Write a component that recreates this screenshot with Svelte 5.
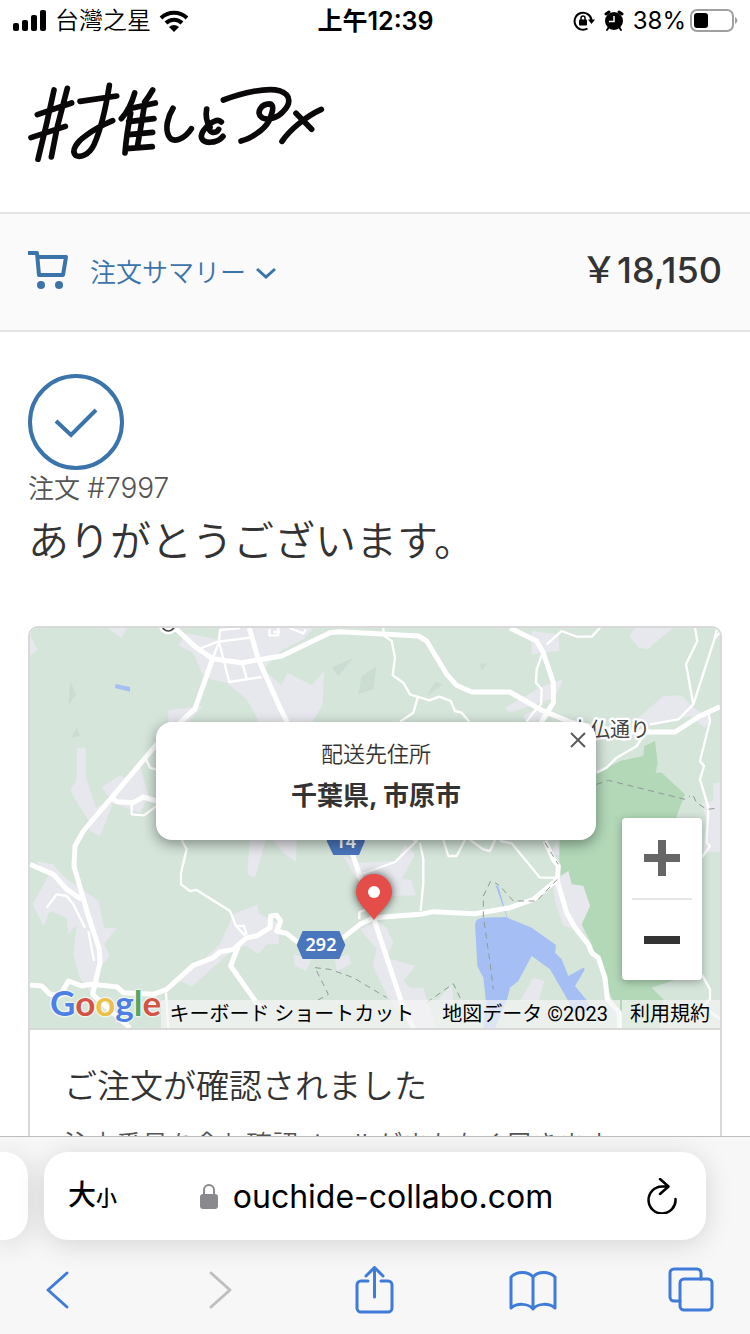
<script lang="ts">
	let summaryOpen: boolean = false;

	const orderNumber: string = "#7997";
	const total: string = "￥18,150";
	const site: string = "ouchide-collabo.com";

	const googleLetters: Array<{char: string, tone: string}> = [
		{ char: "G", tone: "blue" },
		{ char: "o", tone: "red" },
		{ char: "o", tone: "yellow" },
		{ char: "g", tone: "blue" },
		{ char: "l", tone: "green" },
		{ char: "e", tone: "red" }
	];

	const townAreas: Array<string> = [
		"30,60 52,100 30,120",
		"262,36 320,36 305,66",
		"475,88 500,52 592,70 600,36 880,36 850,70 790,100 760,125 740,150 735,165 785,208 802,170 875,208 912,165 908,265 870,330 725,330 680,250 620,200 565,188 545,170 520,110",
		"445,283 548,270 500,325 445,325",
		"150,525 170,490 170,395 197,395 197,485 228,575 270,550 245,512 300,478 320,490 360,450 385,540 360,590 280,560 240,660 210,645 210,620",
		"48,735 100,745 130,780 235,855 252,935 290,935 252,985 270,1020 230,1065 240,1105 215,1135 180,1085 160,1015 170,925 145,955 140,905 90,885 70,930 38,865 85,780",
		"480,1095 600,985 640,895 710,867 720,895 780,925 775,985 740,985 715,1015 680,990 640,1000 515,1112",
		"690,660 740,660 705,785 682,775",
		"750,660 830,660 828,737 790,710",
		"970,720 1020,740 1130,735 1155,685 1185,715 1145,790 1175,792 1187,838 1115,840 1080,800 1010,790",
		"1020,940 1070,915 1100,935 1120,980 1100,1025 1185,1050 1150,1095 1170,1115 1210,1115 1220,1150 1250,1236 1180,1236 1105,1145 1058,1050 1070,1000",
		"820,1015 875,1030 858,1065 825,1050",
		"945,1030 985,1015 993,1045 950,1065",
		"1295,1105 1300,1160 1250,1155",
		"1540,1085 1573,1095 1555,1155 1500,1155",
		"1610,675 1625,720 1595,715",
		"2060,615 2045,560 2080,555 2080,500 2100,500 2100,707 2050,707",
		"1535,45 1615,55 1618,105 1535,115",
		"1455,275 1570,210 1630,190 1605,245 1470,290",
		"1510,300 1560,270 1590,300 1520,325",
		"1828,60 1845,36 1960,36 1905,80 1885,100 1855,95",
		"1850,310 1930,240 1985,238 2015,270 2075,310 2055,335 2010,300 1890,330"
	];

	const terrain: Array<string> = [
		"150,195 168,235 145,270",
		"170,332 180,360 155,365",
		"935,155 1000,125 955,180",
		"1070,150 1060,220 1015,235 1025,180",
		"1245,198 1270,205 1220,240",
		"1380,145 1402,140 1385,165"
	];

	const mainRoads: Array<string> = [
		"M465 36 525 92 578 128 665 140 785 120 930 50 960 47 1195 60 1220 75 1280 175 1310 208 1355 228 1470 228 1560 280 1650 318 1760 348H1965L2040 300 2100 272",
		"M578 128 525 278 410 385 275 545 190 645 165 690 162 750 205 900 238 1000 240 1040 218 1135 330 1236",
		"M688 36 715 130 780 275 1000 720 1062 910 1145 1160 1180 1236",
		"M30 745 100 775 140 820 185 850",
		"M30 1107 65 1110 90 1135 120 1140 145 1095 185 1110 210 1105 290 1112 310 1130 400 1135 440 1120 520 1048 580 1025 600 1008 640 1000 680 965 710 960 750 935 752 900 770 898 782 915 770 945 800 952 835 980 970 965 1020 925 1062 905 1200 895 1240 887 1365 893 1470 875 1540 850 1612 790",
		"M655 990 632 1050 720 1175",
		"M1575 675 1600 730 1615 750 1612 795 1640 890 1665 935 1705 985 1715 1010 1735 1025 1755 1085 1762 1150 1798 1190V1236",
		"M1470 36 1550 75 1570 110 1600 200 1600 260 1560 325",
		"M275 545 290 557 340 560 370 543 420 558"
	];

	const minorRoads: Array<string> = [
		"M540 98 590 78 690 65M660 36 600 42 597 78 628 198 725 183M597 78 578 128M668 145 680 188M748 38V58H775V36M760 48H780M808 36 850 52 858 40",
		"M335 565V595L372 598 410 570M378 430 390 455 420 465",
		"M1090 36V58L1115 75 1125 125 1118 178 1150 200 1170 235 1228 253 1258 242 1292 255 1305 285 1325 290 1348 317M1193 245 1180 290 1140 317",
		"M1580 85 1625 45 1670 62H1715L1740 36M1570 105 1550 160 1548 200 1565 220 1563 265 1540 290 1520 317",
		"M2025 36 2032 75 1998 145 2020 265M2092 36 2080 80 2020 265 1975 310 1890 325M2100 50 2085 65M2065 290 2070 315 2040 435 2052 450 2040 490 2065 575 2060 680 2070 690 2045 725",
		"M1730 470 1760 455 1790 425 1850 390 1870 360",
		"M485 672 500 700 483 770V805L510 825 530 822 630 885 648 930 675 958M648 930H672L680 955",
		"M80 875 110 835 140 840 160 865 195 935M205 945 222 1035M200 880 215 915",
		"M1010 780 1125 738 1190 675 1180 672M1200 680 1210 730V800L1202 885M1050 878 1018 888V910M1270 672 1285 720H1310L1335 672M1350 672 1390 700 1410 705 1425 672",
		"M1440 675 1475 682 1560 785H1612",
		"M2045 1075 2070 1120V1150L2050 1170 2100 1210M438 1130 445 1236"
	];

	const trails: Array<string> = [
		"M1730 505 1765 493 1995 550 2010 540M2020 540 2030 560 2060 580 2090 577",
		"M1575 680 1615 745M1612 790 1550 855 1480 855 1440 810 1425 800M1412 795 1390 840V900L1410 1040 1420 1120",
		"M885 1055 930 1060 1000 1085 1100 1145M890 1065 925 1135 880 1160M1220 1160 1300 1103 1325 1155"
	];
</script>

<svelte:head>
	<title>注文 {orderNumber}</title>
</svelte:head>

<div class="screen">
	<div class="status-bar">
		<div class="status-left">
			<svg class="signal" viewBox="0 0 34 22" width="34" height="22" aria-hidden="true">
				<rect x="0" y="13" width="6" height="8" rx="2" />
				<rect x="9" y="10" width="6" height="11" rx="2" />
				<rect x="18" y="5" width="6" height="16" rx="2" />
				<rect x="27" y="0" width="6" height="21" rx="2" />
			</svg>
			<span>台灣之星</span>
			<svg viewBox="0 0 30 22" width="30" height="22" aria-hidden="true">
				<g fill="none" stroke="#000" stroke-width="4">
					<path d="M2 8A19 19 0 0 1 28 8" />
					<path d="M7 13A11.500 11.500 0 0 1 23 13" />
				</g>
				<path d="M15 22 10 17Q15 13 20 17Z" />
			</svg>
		</div>
		<div class="time">上午12:39</div>
		<div class="status-right">
			<svg viewBox="0 0 22 22" width="22" height="22" aria-hidden="true">
				<path d="M14.500 18.500A8.500 8.500 0 1 1 18.500 10" fill="none" stroke="#000" stroke-width="2" />
				<path d="M15 9.500H22L18.500 14Z" />
				<rect x="6" y="9.500" width="8" height="6" rx="1" />
				<path d="M8 10V8a2 2 0 0 1 4 0v2" fill="none" stroke="#000" stroke-width="1.500" />
			</svg>
			<svg class="alarm" viewBox="0 0 20 22" width="20" height="22" aria-hidden="true">
				<circle cx="10" cy="11" r="9" />
				<path d="M2 4 5 2M15 2 18 4" stroke="#000" stroke-width="3" stroke-linecap="round" />
				<path d="M5 17 3 20M15 17 17 20" stroke="#000" stroke-width="2" stroke-linecap="round" />
				<path d="M10 6V11.500H5" fill="none" stroke="#fff" stroke-width="1.500" />
			</svg>
			<span>38%</span>
			<svg viewBox="0 0 48 24" width="48" height="24" aria-hidden="true">
				<rect x="1" y="1" width="42" height="21" rx="6" fill="none" stroke="#a0a0a0" stroke-width="2" />
				<rect x="4" y="4" width="14" height="15" rx="3" />
				<path d="M45 8Q50 11.500 45 15Z" fill="#a0a0a0" />
			</svg>
		</div>
	</div>

	<main>
		<header>
			<a class="logo" href="/" aria-label="#推しとアメ">
				<svg viewBox="84 246 891 240" width="297" height="80" aria-hidden="true">
					<g fill="none" stroke="#0a0808" stroke-width="17" stroke-linecap="round" stroke-linejoin="round">
						<path d="M162 270 140 370 114 478M202 265 172 380 154 471M112 344 215 309M93 413 196 379" />
						<path d="M328 256C318 320 306 380 282 434C266 466 240 474 227 466C212 452 232 424 256 408C282 388 314 372 338 362M240 304 350 288" />
						<path d="M404 279C396 308 384 334 364 356M458 270C450 284 442 296 434 306M392 340C384 380 378 420 375 459M384 327 466 309M386 365 462 356M386 404 458 397M380 446 457 440M434 310C428 350 420 396 412 440" />
						<path d="M519 325C502 352 495 386 506 408C520 434 556 414 574 386" />
						<path d="M620 327C616 348 620 366 630 382M664 366C648 348 606 388 604 408C604 434 650 432 669 409M630 382C622 400 650 402 656 388" />
						<path d="M670 300C730 278 800 262 838 272C880 286 868 316 850 334C832 354 806 362 788 354C764 340 784 310 812 312C826 320 812 350 806 364C792 390 752 416 723 423" />
						<path d="M964 328C920 348 870 388 846 424M888 340 935 388" />
					</g>
				</svg>
			</a>
		</header>

		<section class="summary">
			<button class="summary-toggle" aria-expanded={summaryOpen} on:click={() => summaryOpen = !summaryOpen}>
				<svg viewBox="0 0 40 38" width="40" height="38" aria-hidden="true">
					<path d="M0 2H9L11 24H35L38 6H10" fill="none" stroke="#3b74ab" stroke-width="4" stroke-linejoin="round" />
					<circle cx="13" cy="34" r="4" fill="#3b74ab" />
					<circle cx="31" cy="34" r="4" fill="#3b74ab" />
				</svg>
				<span>注文サマリー</span>
				<svg class="chevron" class:open={summaryOpen} viewBox="0 0 20 18" width="20" height="18" aria-hidden="true">
					<path d="M1 8 10 16 19 8" fill="none" stroke="#3b74ab" stroke-width="3" />
				</svg>
			</button>
			<strong class="total">{total}</strong>
		</section>

		<section class="content">
			<svg class="check" viewBox="0 0 96 96" width="96" height="96" aria-hidden="true">
				<circle cx="48" cy="48" r="46" />
				<path d="M28 47 43 61 68 36" />
			</svg>
			<p class="order-number">注文 <span>{orderNumber}</span></p>
			<h1>ありがとうございます。</h1>

			<article class="card">
				<div class="map">
					<svg class="map-art" viewBox="30 36 2070 1200" preserveAspectRatio="xMidYMid slice" aria-hidden="true">
						{#each townAreas as area}
							<polygon points={area} fill="#e7e8ed" />
						{/each}
						{#each terrain as slope}
							<polygon points={slope} fill="#cbdcd2" />
						{/each}
						<path d="M1620 615 1610 480 1730 470 1800 435 1870 420 1873 390 1905 375 1913 440 1907 470 1925 470 1995 535 1970 600V1090L1895 1115 1930 1150 1920 1236H1800L1790 1175 1760 1115 1715 985 1685 925 1710 870 1690 810 1655 805 1645 765 1620 780 1618 725Z" fill="#b2d8b8" />
						<polygon points="1600,800 1645,765 1655,805 1690,810 1710,870 1685,925 1690,945 1630,930 1605,855" fill="#e7e8ed" />
						<path d="M1370 912 1385 905 1460 903 1427 808 1435 810 1462 905 1535 935 1608 987 1605 1010 1625 1030 1645 1080 1690 1055 1695 1060 1665 1110 1702 1155 1715 1185 1660 1190 1645 1155 1590 1060 1535 1020 1495 1095 1470 1115 1460 1155 1425 1236H1390L1398 1155 1390 1085 1372 1050 1365 925Z" fill="#a5bff4" />
						<path d="M287 204 330 213V227L285 216Z" fill="#a5bff4" />
						<g class="roads minor">
							{#each minorRoads as road}
								<path d={road} />
							{/each}
						</g>
						<g class="roads">
							{#each mainRoads as road}
								<path d={road} />
							{/each}
						</g>
						<g class="trails">
							{#each trails as trail}
								<path d={trail} />
							{/each}
						</g>
						<circle cx="445" cy="26" r="20" fill="#fff" stroke="#fff" stroke-width="18" />
						<circle cx="445" cy="26" r="19" fill="#fff" stroke="#444" stroke-width="5" />
						<polygon class="shield" points="935,645 1017,645 1035,675 1017,717 940,717 920,675" />
						<text class="route" x="977" y="695">14</text>
						<polygon class="shield" points="848,945 958,945 976,987 958,1029 848,1029 830,987" />
						<text class="route" x="903" y="1005">292</text>
						<text class="street" x="1650" y="363">大仏通り</text>
					</svg>

					<svg class="pin" viewBox="0 0 60 66" width="60" height="66" aria-hidden="true">
						<path d="M30 56C24 47 12 39 12 28A18 18 0 0 1 48 28C48 39 36 47 30 56Z" fill="#e44d48" />
						<circle cx="30" cy="28" r="6" fill="#fff" />
					</svg>

					<div class="info-window">
						<p class="info-title">配送先住所</p>
						<p class="info-place">千葉県, 市原市</p>
						<button class="close" aria-label="閉じる">
							<svg viewBox="0 0 16 16" width="16" height="16" aria-hidden="true">
								<path d="M1 1 15 15M15 1 1 15" stroke="#5c5c5c" stroke-width="2" />
							</svg>
						</button>
					</div>

					<div class="zoom">
						<button aria-label="ズームイン">
							<svg viewBox="0 0 36 36" width="36" height="36" aria-hidden="true">
								<path d="M14 0H22V14H36V22H22V36H14V22H0V14H14Z" fill="#666" />
							</svg>
						</button>
						<button aria-label="ズームアウト">
							<svg viewBox="0 0 36 36" width="36" height="36" aria-hidden="true">
								<path d="M0 14H36V22H0Z" fill="#333" />
							</svg>
						</button>
					</div>

					<div class="attribution">
						<button>キーボード ショートカット</button>
						<span>地図データ ©2023</span>
						<a href="https://www.google.com/help/terms_maps/">利用規約</a>
					</div>

					<a class="google" href="https://maps.google.com/" aria-label="Google">
						{#each googleLetters as letter}<span class={letter.tone}>{letter.char}</span>{/each}
					</a>
				</div>

				<div class="card-text">
					<h2>ご注文が確認されました</h2>
					<p>注文番号を含む確認メールがまもなく届きます。</p>
				</div>
			</article>
		</section>
	</main>

	<footer>
		<div class="tabs">
			<div class="tab previous"></div>
			<div class="tab current">
				<button class="text-size" aria-label="大小">大<small>小</small></button>
				<button class="address">
					<svg viewBox="0 0 18 26" width="18" height="26" aria-hidden="true">
						<path d="M4 12V7a5 5 0 0 1 10 0V12" fill="none" stroke="#8a8a8e" stroke-width="2" />
						<rect x="0" y="11" width="18" height="15" rx="3" fill="#8a8a8e" />
					</svg>
					<span>{site}</span>
				</button>
				<button class="reload" aria-label="再読み込み">
					<svg viewBox="0 0 32 36" width="32" height="36" aria-hidden="true">
						<path d="M22 8.500H16A13.500 13.500 0 1 0 29.500 21M14 1 22.500 8.500 14 16" fill="none" stroke="#000" stroke-width="2.500" stroke-linecap="round" stroke-linejoin="round" />
					</svg>
				</button>
			</div>
		</div>
		<nav class="toolbar">
			<button aria-label="戻る">
				<svg viewBox="0 0 48 48" width="48" height="48"><path d="M34 7 15 24 34 41" /></svg>
			</button>
			<button aria-label="進む" disabled>
				<svg viewBox="0 0 48 48" width="48" height="48"><path d="M19 7 38 24 19 41" /></svg>
			</button>
			<button aria-label="共有">
				<svg viewBox="0 0 48 48" width="48" height="48">
					<path d="M18 15H11A4 4 0 0 0 7 19V42A4 4 0 0 0 11 46H38A4 4 0 0 0 42 42V19A4 4 0 0 0 38 15H31M24.500 31V2M16 10 24.500 1.500 33 10" />
				</svg>
			</button>
			<button aria-label="ブックマーク">
				<svg viewBox="0 0 48 48" width="48" height="48">
					<path d="M24 11C19 5 8 5 2 11V42C8 37 19 37 24 43C29 37 40 37 46 42V11C40 5 29 5 24 11V43" />
				</svg>
			</button>
			<button aria-label="タブ">
				<svg viewBox="0 0 48 48" width="48" height="48">
					<path d="M13 35H7A4 4 0 0 1 3 31V7A4 4 0 0 1 7 3H30A4 4 0 0 1 34 7V13" />
					<rect x="13" y="13" width="32" height="31" rx="4" />
				</svg>
			</button>
		</nav>
	</footer>
</div>

<style>
	:global(body) {
		margin: 0;
		background-color: #fff;
	}

	.screen {
		height: 100vh;
		display: flex;
		flex-direction: column;
		overflow: hidden;
		font-family: Inter, "Noto Sans CJK JP", sans-serif;
		font-weight: 350;
		color: #333;
	}

	button {
		border: none;
		padding: 0;
		background: none;
		font: inherit;
		color: inherit;
	}

	a {
		color: inherit;
		text-decoration: none;
	}

	h1, h2, p {
		margin: 0;
		font-weight: 350;
	}

	svg {
		display: block;
		flex: none;
	}

	.status-bar {
		display: grid;
		grid-template-columns: 1fr auto 1fr;
		align-items: center;
		height: 42px;
		padding: 0 12px 0 13px;
		box-sizing: border-box;
		font-family: Inter, "Noto Sans CJK TC", sans-serif;
		font-size: 24px;
		line-height: 24px;
		font-weight: 400;
		color: #000;
	}

	.status-left, .status-right {
		display: flex;
		align-items: center;
		gap: 8px;
	}

	.status-left {
		font-weight: 350;
	}

	.status-right {
		justify-content: flex-end;
		gap: 4px;
	}

	.alarm {
		margin: 0 5px;
	}

	.time {
		font-size: 25px;
		font-weight: 600;
	}

	main {
		flex: 1;
		min-height: 0;
		overflow: hidden;
	}

	header {
		padding: 40px 28px 50px;
	}

	.logo {
		display: inline-block;
		vertical-align: top;
	}

	.summary {
		display: flex;
		justify-content: space-between;
		align-items: center;
		height: 112px;
		padding: 0 28px 4px;
		border-top: 2px solid #e4e4e4;
		border-bottom: 2px solid #e4e4e4;
		background-color: #fafafa;
	}

	.summary-toggle {
		display: flex;
		align-items: center;
		font-size: 26px;
		color: #3b74ab;
	}

	.summary-toggle span {
		margin: 0 10px 0 22px;
	}

	.chevron.open {
		transform: rotate(180deg);
	}

	.total {
		font-size: 36px;
		line-height: 36px;
		font-weight: 500;
	}

	.content {
		padding: 42px 28px 0;
	}

	.check {
		fill: none;
		stroke: #3b74ab;
		stroke-width: 4;
	}

	.order-number {
		font-size: 26px;
		line-height: 36px;
		color: #545454;
	}

	.order-number span {
		font-size: 28px;
	}

	h1 {
		margin: 6px 0 57px;
		font-size: 41px;
		line-height: 56px;
	}

	.card {
		border: 2px solid #d9d9d9;
		border-radius: 10px;
		overflow: hidden;
	}

	.map {
		position: relative;
		height: 400px;
		border-bottom: 2px solid #d9d9d9;
		background-color: #d5e5da;
		overflow: hidden;
	}

	.map-art {
		width: 100%;
		height: 100%;
	}

	.roads {
		fill: none;
		stroke: #fff;
		stroke-width: 15;
		stroke-linejoin: round;
	}

	.roads.minor {
		stroke-width: 7;
	}

	.trails {
		fill: none;
		stroke: #8f9a94;
		stroke-width: 3;
		stroke-dasharray: 18 14;
	}

	.shield {
		fill: #4a76bd;
	}

	.route {
		font-family: "Noto Sans", sans-serif;
		font-size: 54px;
		font-weight: 600;
		text-anchor: middle;
		fill: #fff;
	}

	.street {
		font-size: 60px;
		font-weight: 400;
		fill: #444;
		stroke: #fff;
		stroke-width: 14;
		stroke-linejoin: round;
		paint-order: stroke;
	}

	.pin {
		position: absolute;
		left: 50%;
		top: 236px;
		margin-left: -31px;
		filter: drop-shadow(0 0 5px rgba(0, 0, 0, 0.7));
	}

	.info-window {
		position: absolute;
		top: 94px;
		left: 50%;
		width: 440px;
		height: 118px;
		margin-left: -219px;
		padding-top: 16px;
		box-sizing: border-box;
		border-radius: 16px;
		background-color: #fff;
		box-shadow: 0 4px 14px rgba(0, 0, 0, 0.4);
		text-align: center;
	}

	.info-title {
		font-size: 22px;
		line-height: 32px;
	}

	.info-place {
		margin-top: 8px;
		font-size: 26px;
		line-height: 36px;
		font-weight: 700;
	}

	.close {
		position: absolute;
		top: 10px;
		right: 10px;
	}

	.zoom {
		position: absolute;
		right: 18px;
		bottom: 48px;
		display: flex;
		flex-direction: column;
		width: 80px;
		border-radius: 4px;
		background-color: #fff;
		box-shadow: 0 2px 8px rgba(0, 0, 0, 0.3);
	}

	.zoom button {
		display: flex;
		justify-content: center;
		align-items: center;
		height: 80px;
		margin: 0 10px;
	}

	.zoom button + button {
		border-top: 2px solid #e6e6e6;
		height: 82px;
	}

	.google {
		position: absolute;
		left: 20px;
		bottom: 4px;
		font-family: Lato, sans-serif;
		font-size: 35px;
		line-height: 44px;
		font-weight: 700;
		text-shadow: 0 0 2px #fff, 0 0 2px #fff, 0 0 3px #fff;
	}

	.blue {
		color: #4d80e4;
	}

	.red {
		color: #d25445;
	}

	.yellow {
		color: #ecc04b;
	}

	.green {
		color: #58a55c;
	}

	.attribution {
		position: absolute;
		right: 0;
		bottom: 0;
		display: flex;
		font-family: Roboto, "Noto Sans CJK JP", sans-serif;
		font-size: 20px;
		line-height: 28px;
		font-weight: 400;
		color: #000;
	}

	.attribution > * {
		padding: 0 10px 0 8px;
		background-color: rgba(245, 245, 245, 0.7);
	}

	.attribution > span {
		padding: 0 12px 0 18px;
	}

	.attribution > a {
		margin-left: 2px;
	}

	.card-text {
		padding: 34px;
	}

	h2 {
		font-size: 33px;
		line-height: 44px;
	}

	.card-text p {
		margin-top: 19px;
		font-size: 26px;
		line-height: 36px;
		color: #545454;
	}

	footer {
		border-top: 1px solid #bdbdbd;
		background-color: #f7f7f7;
		overflow: hidden;
		color: #000;
		font-weight: 400;
	}

	.tabs {
		display: flex;
		gap: 16px;
		padding: 15px 44px 0 0;
	}

	.tab {
		height: 88px;
		border-radius: 24px;
		background-color: #fff;
		box-shadow: 0 4px 28px rgba(0, 0, 0, 0.14);
	}

	.previous {
		width: 28px;
		border-radius: 0 24px 24px 0;
	}

	.current {
		flex: 1;
		display: flex;
		justify-content: space-between;
		align-items: center;
		padding: 0 28px 0 24px;
	}

	.text-size {
		font-size: 28px;
		line-height: 36px;
		font-weight: 500;
	}

	.text-size small {
		font-size: 21px;
	}

	.address {
		display: flex;
		align-items: center;
		gap: 15px;
		margin-right: 10px;
		font-size: 32px;
	}

	.toolbar {
		display: flex;
		justify-content: space-between;
		padding: 26px 35px 20px 33px;
	}

	.toolbar svg {
		fill: none;
		stroke: #3f7bd9;
		stroke-width: 3;
		stroke-linecap: round;
		stroke-linejoin: round;
	}

	.toolbar button:disabled svg {
		stroke: #bfbfbf;
	}
</style>
